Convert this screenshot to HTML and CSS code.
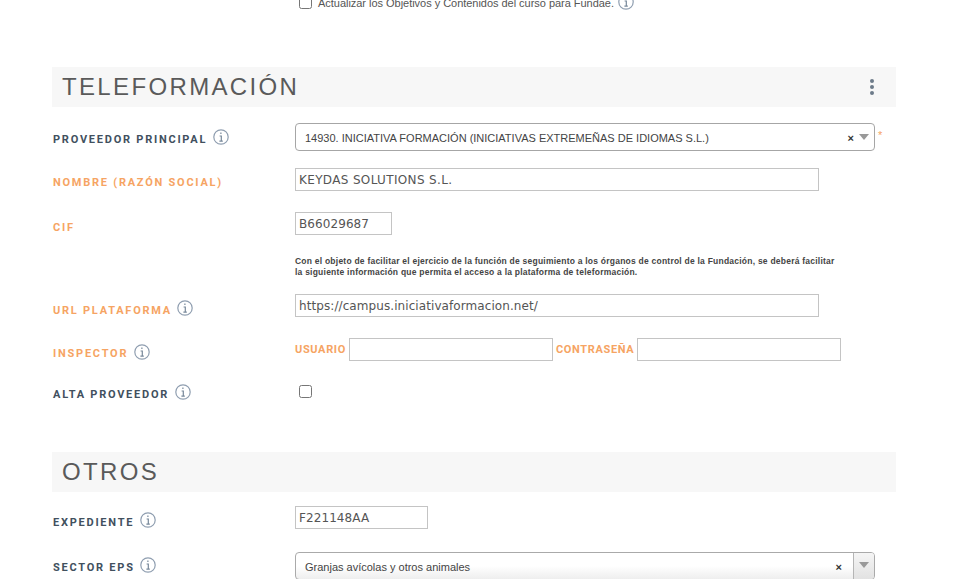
FILE: index.html
```html
<!DOCTYPE html>
<html lang="es">
<head>
<meta charset="utf-8">
<title>Teleformación</title>
<link rel="stylesheet" href="styles.css">
</head>
<body>
<svg class="defs" width="0" height="0" aria-hidden="true">
  <symbol id="info" viewBox="0 0 16 16">
    <circle cx="8" cy="8" r="7.2" fill="none" stroke="#8f9eb0" stroke-width="1.2"/>
    <path d="M7.9 3.6v1.4M6.6 7h1.7v5M6.4 12.1h3.4" fill="none" stroke="#77889a" stroke-width="1.2"/>
  </symbol>
</svg>
<main class="page">
  <div class="top-clip">
    <div class="top-row">
      <input type="checkbox" class="check">
      <span class="top-text">Actualizar los Objetivos y Contenidos del curso para Fundae.</span>
      <svg class="info"><use href="#info"/></svg>
    </div>
  </div>

  <section class="section sec-tele">
    <header class="sec-head">
      <h2>TELEFORMACIÓN</h2>
      <span class="kebab"><i></i><i></i><i></i></span>
    </header>

    <div class="row row-select">
      <label class="lab">PROVEEDOR PRINCIPAL <svg class="info"><use href="#info"/></svg></label>
      <div class="select">
        <span class="sel-text">14930. INICIATIVA FORMACIÓN (INICIATIVAS EXTREMEÑAS DE IDIOMAS S.L.)</span>
        <span class="sel-x">×</span>
        <span class="caret"></span>
      </div>
      <span class="req">*</span>
    </div>

    <div class="row row-name">
      <label class="lab warn">NOMBRE (RAZÓN SOCIAL)</label>
      <input class="field w-long caps" value="KEYDAS SOLUTIONS S.L.">
    </div>

    <div class="row row-cif">
      <label class="lab warn">CIF</label>
      <input class="field w-cif" value="B66029687">
    </div>

    <p class="note">Con el objeto de facilitar el ejercicio de la función de seguimiento a los órganos de control de la Fundación, se deberá facilitar<br>la siguiente información que permita el acceso a la plataforma de teleformación.</p>

    <div class="row row-url">
      <label class="lab warn">URL PLATAFORMA <svg class="info"><use href="#info"/></svg></label>
      <input class="field w-long" value="https://campus.iniciativaformacion.net/">
    </div>

    <div class="row row-insp">
      <label class="lab warn">INSPECTOR <svg class="info"><use href="#info"/></svg></label>
      <div class="pair">
        <span class="mini">USUARIO</span>
        <input class="field w-cred">
        <span class="mini">CONTRASEÑA</span>
        <input class="field w-cred">
      </div>
    </div>

    <div class="row row-alta">
      <label class="lab">ALTA PROVEEDOR <svg class="info"><use href="#info"/></svg></label>
      <input type="checkbox" class="check">
    </div>
  </section>

  <section class="section sec-otros">
    <header class="sec-head"><h2>OTROS</h2></header>

    <div class="row row-exp">
      <label class="lab">EXPEDIENTE <svg class="info"><use href="#info"/></svg></label>
      <input class="field w-exp" value="F221148AA">
    </div>

    <div class="row row-sector">
      <label class="lab">SECTOR EPS <svg class="info"><use href="#info"/></svg></label>
      <div class="select select-btn">
        <span class="sel-text">Granjas avícolas y otros animales</span>
        <span class="sel-x">×</span>
        <span class="btn"><span class="caret"></span></span>
      </div>
    </div>
  </section>
</main>
</body>
</html>
```
FILE: styles.css
```css
html, body {
  margin: 0;
  height: 579px;
  overflow: hidden;
  background: #fff;
}
body {
  font-family: "Liberation Sans", Arial, sans-serif;
  color: #333;
}
.defs { position: absolute; }
.page {
  width: 844px;
  margin-left: 52px;
}
.top-clip {
  height: 12px;
  overflow: hidden;
  position: relative;
}
.top-row {
  display: flex;
  align-items: center;
  height: 20px;
  margin-top: -8px;
  padding-left: 247px;
}
.top-text {
  font-size: 11px;
  letter-spacing: -.03px;
  color: #555;
  margin: 2px 0 0 6px;
}
.top-row .info { margin: 0 0 0 4px; }
.check {
  appearance: none;
  width: 13px;
  height: 13px;
  margin: 0;
  border: 1px solid #767676;
  border-radius: 2.5px;
  background: #fff;
  flex: none;
}
.section { display: block; }
.sec-tele { margin-top: 55px; }
.sec-otros { margin-top: 49px; }
.sec-head {
  height: 40px;
  background: #f7f7f7;
  display: flex;
  align-items: center;
  justify-content: space-between;
  padding: 0 22px 0 10px;
}
.sec-head h2 {
  margin: 0;
  font-size: 24px;
  font-weight: 400;
  letter-spacing: 2.35px;
  color: #5a5a5a;
}
.kebab {
  display: flex;
  flex-direction: column;
  gap: 2px;
}
.kebab i {
  width: 4px;
  height: 4px;
  border-radius: 50%;
  background: #6d7b8a;
}
.row {
  display: flex;
  align-items: center;
}
.lab {
  width: 243px;
  flex: none;
  padding-left: 1px;
  box-sizing: border-box;
  display: flex;
  align-items: center;
  font-family: Roboto, "Liberation Sans", sans-serif;
  font-size: 11px;
  font-weight: 700;
  letter-spacing: 1.76px;
  color: #41505e;
  white-space: pre;
}
.lab.warn { color: #f6a463; }
.info {
  width: 16px;
  height: 16px;
  flex: none;
  margin: -5px 0 0 1px;
}
.field {
  box-sizing: border-box;
  height: 23px;
  padding: 0 3px;
  border: 1px solid #c4c4c4;
  border-radius: 0;
  background: #fff;
  outline: none;
  font-family: "DejaVu Sans", sans-serif;
  font-size: 12px;
  letter-spacing: .08px;
  color: #555;
}
.field.caps { letter-spacing: .35px; }
.w-long { width: 524px; }
.w-cif { width: 97px; }
.w-exp { width: 133px; }
.w-cred { width: 204px; }
.select {
  box-sizing: border-box;
  width: 580px;
  height: 28px;
  border: 1px solid #a6a6a6;
  border-radius: 4px;
  display: flex;
  align-items: center;
  padding: 2px 5px 0 9px;
  background: #fff;
  font-size: 11px;
  color: #444;
  flex: none;
}
.sel-text { flex: 1; }
.sel-x {
  font-size: 11px;
  font-weight: 700;
  color: #333;
  margin-right: 5px;
}
.caret {
  width: 0;
  height: 0;
  margin-top: -2px;
  border-left: 5px solid transparent;
  border-right: 5px solid transparent;
  border-top: 6px solid #999;
}
.req {
  color: #f6a463;
  font-size: 11px;
  margin: -4px 0 0 3px;
}
.row-select { margin-top: 16px; }
.row-select .lab { padding-top: 4px; }
.row-name { margin-top: 17px; }
.row-cif { margin-top: 21px; }
.row-name .lab { padding-top: 5px; }
.row-cif .lab { padding-top: 7px; }
.note {
  margin: 21px 0 0 243px;
  font-size: 8.5px;
  font-weight: 700;
  line-height: 11px;
  letter-spacing: .23px;
  color: #444;
}
.row-url { margin-top: 16px; }
.row-url .lab { padding-top: 10px; }
.row-insp { margin-top: 21px; }
.row-insp .lab { padding-top: 7px; }
.row-insp .info { margin-top: -3px; }
.pair {
  display: flex;
  align-items: center;
}
.mini {
  font-family: Roboto, "Liberation Sans", sans-serif;
  font-size: 11px;
  font-weight: 700;
  letter-spacing: .65px;
  color: #f6a463;
  margin-right: 3px;
}
.pair .field + .mini { margin-left: 3px; }
.row-alta { margin-top: 20px; height: 22px; }
.row-alta .lab { padding-top: 4px; }
.row-alta .check { margin-left: 4px; margin-top: -1px; }
.row-exp { margin-top: 14px; }
.row-exp .lab { padding-top: 10px; }
.row-sector { margin-top: 23px; align-items: flex-start; }
.row-sector .lab { padding-top: 9px; }
.select-btn {
  padding-right: 0;
  background: linear-gradient(#fff 50%, #eee);
  border-color: #aaa;
}
.select-btn .sel-x { margin-right: 11px; }
.btn {
  align-self: stretch;
  width: 20px;
  margin-top: -2px;
  border-left: 1px solid #b5b5b5;
  background: linear-gradient(#f5f5f5, #e2e2e2);
  border-radius: 0 3px 3px 0;
  display: flex;
  align-items: center;
  justify-content: center;
}
```
